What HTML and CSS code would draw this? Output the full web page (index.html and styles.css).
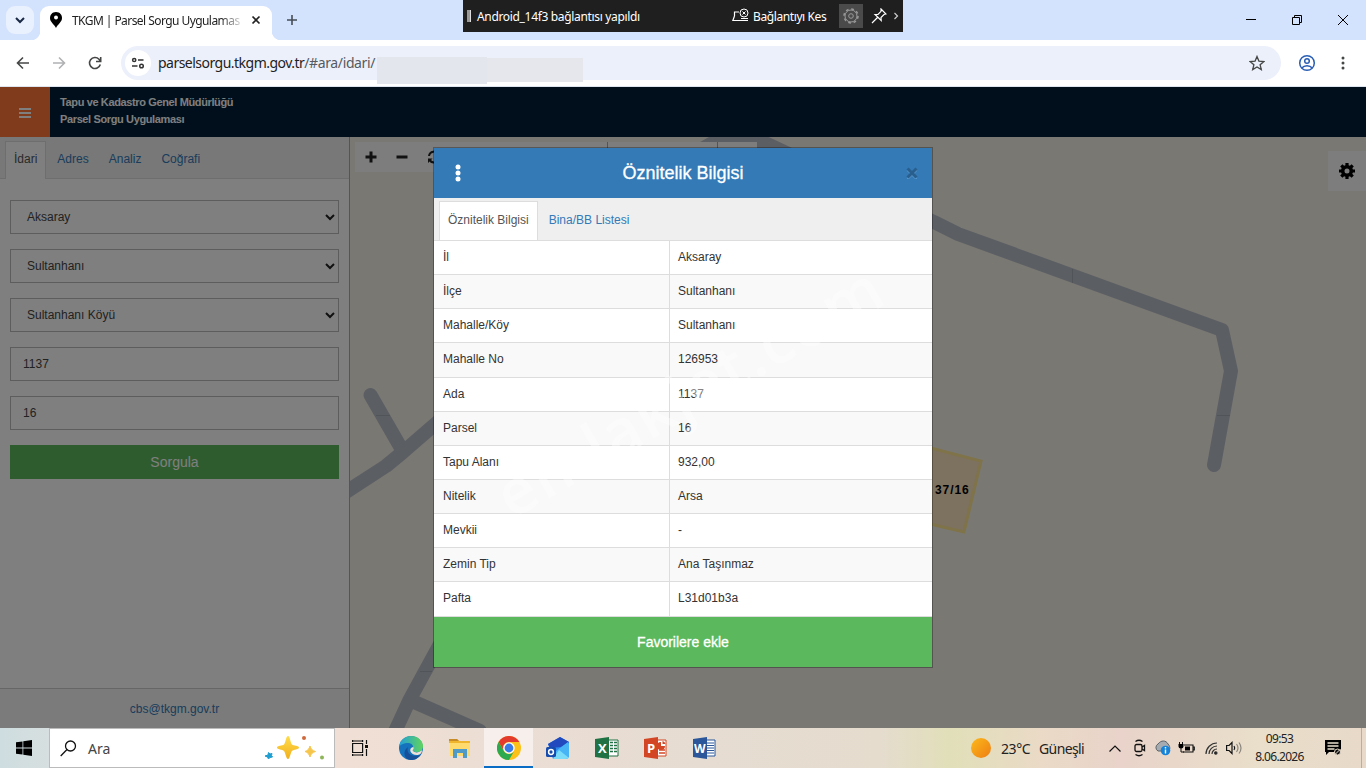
FILE: index.html
```html
<!DOCTYPE html>
<html lang="tr">
<head>
  <meta charset="UTF-8">
  <title>TKGM | Parsel Sorgu Uygulaması</title>
  <link rel="stylesheet" href="styles.css">
</head>
<body>
  <div class="tab-strip">
    <div class="tab-search"><svg width="12" height="12" viewBox="0 0 12 12"><path d="M2 4l4 4 4-4" fill="none" stroke="#1a2a44" stroke-width="2"/></svg></div>
    <div class="browser-tab">
      <svg width="14" height="18" viewBox="0 0 14 18"><path d="M7 1C3 1 1 4 1 7c0 4 4 6 6 10 2-4 6-6 6-10 0-3-2-6-6-6z" fill="#000"/><circle cx="7" cy="6.500" r="2" fill="#fff"/></svg>
      <span class="tab-title">TKGM | Parsel Sorgu Uygulamas</span>
      <svg width="10" height="10" viewBox="0 0 10 10"><path d="M1.500 1.500l7 7M8.500 1.500l-7 7" stroke="#222" stroke-width="1.700"/></svg>
    </div>
    <svg class="new-tab" width="12" height="12" viewBox="0 0 12 12"><path d="M6 1v10M1 6h10" stroke="#474d57" stroke-width="1.600"/></svg>
    <div class="window-buttons">
      <svg width="10" height="10" viewBox="0 0 10 10"><path d="M0 4.500h10" stroke="#000"/></svg>
      <svg width="10" height="10" viewBox="0 0 10 10"><path d="M.5 2.500h7v7h-7zM2.500 2.500v-2h7v7h-2" fill="none" stroke="#000"/></svg>
      <svg width="10" height="10" viewBox="0 0 10 10"><path d="M0 0l10 10M10 0L0 10" stroke="#000"/></svg>
    </div>
    <div class="cast-bar">
      <i class="grip"></i>
      <span class="cast-name">Android_14f3 bağlantısı yapıldı</span>
      <svg width="18" height="16" viewBox="0 0 18 16"><path d="M7 4H2.500v4M2.500 8L.8 12.500h10.700M11.500 12.500h4.500M9 10.500h7" fill="none" stroke="#fff" stroke-width="1.200"/><circle cx="12" cy="5" r="4" fill="#1f1f1f" stroke="#fff"/><path d="M10.500 3.500l3 3M13.500 3.500l-3 3" stroke="#fff"/></svg>
      <span class="cast-stop">Bağlantıyı Kes</span>
      <span class="cast-gear"><svg width="18" height="18" viewBox="0 0 18 18" fill="none" stroke="#9a9a9a"><circle cx="9" cy="9" r="7" stroke-width="1.500" stroke-dasharray="2.750 2.750"/><circle cx="9" cy="9" r="6"/><circle cx="9" cy="9" r="2.300"/></svg></span>
      <svg class="cast-pin" width="16" height="16" viewBox="0 0 16 16"><path d="M10 1l5 5-2 .5-3 3 .2 3L4 6.500l3-.2 3-3zM6.500 9.500L1 15" fill="none" stroke="#fff" stroke-width="1.200"/></svg>
      <svg class="cast-more" width="5" height="8" viewBox="0 0 5 8"><path d="M.5 1l3 3-3 3" fill="none" stroke="#ccc" stroke-width="1.200"/></svg>
    </div>
  </div>

  <div class="toolbar">
    <svg class="nav-icon" width="16" height="16" viewBox="0 0 16 16" fill="none" stroke="#454746" stroke-width="1.600"><path d="M14 8H3M8 2.500L2.500 8 8 13.500"/></svg>
    <svg class="nav-icon" width="16" height="16" viewBox="0 0 16 16" fill="none" stroke="#b0b1b3" stroke-width="1.600"><path d="M2 8h11M8 2.500L13.500 8 8 13.500"/></svg>
    <svg class="nav-icon" width="16" height="16" viewBox="0 0 16 16" fill="none" stroke="#454746" stroke-width="1.600"><path d="M13.300 9.500A5.500 5.500 0 1 1 12 4.200L13.500 6M13.700 2v4.500H9"/></svg>
    <div class="address-bar">
      <span class="site-info"><svg width="14" height="14" viewBox="0 0 14 14" fill="none" stroke="#333" stroke-width="1.500"><circle cx="3.200" cy="4" r="1.600"/><path d="M7 4h5.500M1 10h5.500"/><circle cx="10.500" cy="10" r="1.800"/></svg></span>
      <span class="url">parselsorgu.tkgm.gov.tr<span class="url-path">/#ara/idari/</span></span>
      <i class="smudge smudge-a"></i><i class="smudge smudge-b"></i>
      <svg class="star" width="16" height="16" viewBox="0 0 16 16"><path d="M8 1.500l1.900 4.600 5 .4-3.800 3.200 1.200 4.900L8 12l-4.300 2.600 1.200-4.900L1.100 6.500l5-.4z" fill="none" stroke="#454746" stroke-width="1.300"/></svg>
    </div>
    <svg class="profile" width="18" height="18" viewBox="0 0 18 18" fill="none" stroke="#2a5fb4" stroke-width="1.500"><circle cx="9" cy="9" r="7.300"/><circle cx="9" cy="7" r="2.300"/><path d="M3.800 14c2.500-3 8-3 10.400 0"/></svg>
    <svg class="kebab" width="4" height="14" viewBox="0 0 4 14" fill="#454746"><circle cx="2" cy="2" r="1.500"/><circle cx="2" cy="7" r="1.500"/><circle cx="2" cy="12" r="1.500"/></svg>
  </div>

  <div class="app">
    <div class="app-header">
      <div class="menu-btn"><svg width="14" height="10" viewBox="0 0 14 10"><path d="M1 1h12M1 5h12M1 9h12" stroke="#fff" stroke-width="2"/></svg></div>
      <div class="app-title">Tapu ve Kadastro Genel Müdürlüğü<br>Parsel Sorgu Uygulaması</div>
    </div>
    <div class="app-main">
      <div class="sidebar">
        <div class="tabs">
          <a class="tab active">İdari</a><a class="tab">Adres</a><a class="tab">Analiz</a><a class="tab">Coğrafi</a>
        </div>
        <div class="form">
          <div class="field select">Aksaray<svg width="10" height="7" viewBox="0 0 10 7"><path d="M1 1l4 4 4-4" fill="none" stroke="#222" stroke-width="2"/></svg></div>
          <div class="field select">Sultanhanı<svg width="10" height="7" viewBox="0 0 10 7"><path d="M1 1l4 4 4-4" fill="none" stroke="#222" stroke-width="2"/></svg></div>
          <div class="field select">Sultanhanı Köyü<svg width="10" height="7" viewBox="0 0 10 7"><path d="M1 1l4 4 4-4" fill="none" stroke="#222" stroke-width="2"/></svg></div>
          <div class="field">1137</div>
          <div class="field">16</div>
          <div class="query-btn">Sorgula</div>
        </div>
        <div class="sidebar-footer">cbs@tkgm.gov.tr</div>
      </div>
      <div class="map">
        <svg class="roads" width="1016" height="591" viewBox="350 137 1016 591">
          <g fill="none" stroke="#b7bdc7" stroke-width="14" stroke-linejoin="round" stroke-linecap="round">
            <path d="M340 496L386 466L403 452L440 420"/>
            <path d="M370.500 395L401 448"/>
            <path d="M440 644L410 699L392 738M412 701L480 731"/>
            <path d="M700 150L725 136L765 143L934 222L958 234L1222 330L1231 371L1214 465"/>
          </g>
          <path d="M376 415.500h14M420 671.500h12M1072.500 269v14M1217 415.500h13" stroke="#a3a9b3"/>
          <path d="M900 440L981 461L964 532L900 517z" fill="#fae2be" stroke="#ffe694" stroke-width="3"/>
          <text x="935" y="494" class="parcel-label">37/16</text>
        </svg>
        <div class="map-tools">
          <svg width="12" height="12" viewBox="0 0 12 12"><path d="M6 .5v11M.5 6h11" stroke="#222" stroke-width="3"/></svg>
          <svg width="12" height="12" viewBox="0 0 12 12"><path d="M.5 6h11" stroke="#222" stroke-width="3"/></svg>
          <svg width="14" height="14" viewBox="0 0 14 14"><path d="M11.500 4.500A5 5 0 0 0 2 6M2.500 9.500A5 5 0 0 0 12 8" fill="none" stroke="#222" stroke-width="2"/><path d="M1 13V8.500h4.500zM13 1v4.500H8.500z" fill="#222"/></svg>
          <i class="tool-line line-a"></i><i class="tool-line line-b"></i>
        </div>
        <div class="map-settings"><svg width="16" height="16" viewBox="0 0 16 16"><circle cx="8" cy="8" r="4.300" fill="none" stroke="#000" stroke-width="3.600"/><path d="M8 0v3M8 13v3M0 8h3M13 8h3M2.300 2.300l2.200 2.200M11.500 11.500l2.200 2.200M2.300 13.700l2.200-2.200M11.500 4.500l2.200-2.200" stroke="#000" stroke-width="3.200"/></svg></div>
      </div>
    </div>

    <div class="backdrop"></div>

    <div class="modal">
      <div class="modal-header">
        <svg width="6" height="18" viewBox="0 0 6 18" fill="#fff"><circle cx="3" cy="3" r="2.500"/><circle cx="3" cy="9" r="2.500"/><circle cx="3" cy="15" r="2.500"/></svg>
        <h4>Öznitelik Bilgisi</h4>
        <svg width="12" height="12" viewBox="0 0 12 12"><path d="M1.500 3l9 9M10.500 3l-9 9" stroke="#5f99cb" stroke-width="2"/><path d="M1.500 1.500l9 9M10.500 1.500l-9 9" stroke="#295f8e" stroke-width="3"/></svg>
      </div>
      <div class="tabs modal-tabs">
        <a class="tab active">Öznitelik Bilgisi</a><a class="tab">Bina/BB Listesi</a>
      </div>
      <div class="info">
        <div class="row"><span>İl</span><span>Aksaray</span></div>
        <div class="row"><span>İlçe</span><span>Sultanhanı</span></div>
        <div class="row"><span>Mahalle/Köy</span><span>Sultanhanı</span></div>
        <div class="row"><span>Mahalle No</span><span>126953</span></div>
        <div class="row"><span>Ada</span><span>1137</span></div>
        <div class="row"><span>Parsel</span><span>16</span></div>
        <div class="row"><span>Tapu Alanı</span><span>932,00</span></div>
        <div class="row"><span>Nitelik</span><span>Arsa</span></div>
        <div class="row"><span>Mevkii</span><span>-</span></div>
        <div class="row"><span>Zemin Tip</span><span>Ana Taşınmaz</span></div>
        <div class="row"><span>Pafta</span><span>L31d01b3a</span></div>
      </div>
      <div class="fav-btn">Favorilere ekle</div>
      <div class="watermark">emlakjet.com</div>
    </div>
  </div>

  <div class="taskbar">
    <div class="start"><svg width="16" height="16" viewBox="0 0 16 16"><path d="M0 2.300L6.500 1.400v6.200H0zM7.300 1.300L16 0v7.600H7.300zM0 8.400h6.500v6.200L0 13.700zM7.300 8.400H16V16l-8.700-1.300z"/></svg></div>
    <div class="search-box">
      <svg width="17" height="17" viewBox="0 0 17 17" fill="none" stroke="#111" stroke-width="1.300"><circle cx="10.500" cy="6" r="5"/><path d="M7 9.500L.7 16"/></svg>
      <span>Ara</span>
      <svg class="sparkles" width="62" height="26" viewBox="0 0 62 26"><defs><linearGradient id="gold" x2="0" y2="1"><stop offset="0" stop-color="#ffdc4c"/><stop offset="1" stop-color="#f2b01c"/></linearGradient></defs><path d="M24 1c2 0 2.500 7 4 8.500S35 10.500 35 12.500s-5.500 2-7 3.500-2 8-4 8-2.500-6.500-4-8-7-1.500-7-3.500 5.500-1.500 7-3S22 1 24 1z" fill="url(#gold)"/><path d="M46 11c1 3 2 4.500 5.500 5.500C48 17.500 47 19 46 22c-1-3-2-4.500-5-5.500 3-1 4-2.500 5-5.500z" fill="#f6c64c" stroke="#f6c64c"/><path d="M4.500 17.500l1.500 1.500 2-.5-.5 2 1 1.500-2.500.5L4.500 24l-1-2-2.500-1L4 20z" fill="#1e9ed0" stroke="#1e9ed0"/><circle cx="40" cy="3" r="2" fill="#d06a3c"/><circle cx="58" cy="22.500" r="2" fill="#8eb558"/></svg>
    </div>
    <div class="apps">
      <span class="app-icon task-view"><svg width="16" height="16" viewBox="0 0 16 16" fill="none" stroke="#111" stroke-width="1.200"><path d="M.6 3.500h10v9h-10zM.6 0v2M10.600 0v2M.6 14v2M10.600 14v2M0 1h11M0 15h11M14.500 0v4M14.500 9v7"/><path d="M13 5h3v3h-3z" fill="#111" stroke="none"/></svg></span>
      <span class="app-icon"><svg width="24" height="24" viewBox="0 0 24 24"><defs><linearGradient id="edge-top"><stop offset="0" stop-color="#239fd8"/><stop offset="1" stop-color="#60d45b"/></linearGradient></defs><circle cx="12" cy="12" r="12" fill="#1572bd"/><path d="M0 11C1 4 6 0 12 0c7 0 12 5 12 10 0 4-3 6-6 6-3 0-5-1-4-3 1-4-2-6-5-6-4 0-8 2-9 4z" fill="url(#edge-top)"/><path d="M9 11c-2 5 2 9 8 9 2 0 4-1 5-2-3 5-7 6-10 6-7 0-9-9-3-13z" fill="#174f99"/><path d="M14 11c2 1-1 3 0 4 2 2 6 2 9-1 0 4-3 5-5 5-7 0-9-7-4-8z" fill="#eee0d6"/></svg></span>
      <span class="app-icon"><svg width="22" height="20" viewBox="0 0 22 20"><path d="M0 1h8l2 2h11v15H1V5H0z" fill="#eeb52d"/><path d="M1 5h20v13H1z" fill="#ffda6d"/><path d="M0 1h8l2 2H0z" fill="#c88c27"/><path d="M4 11h14v9h-4v-5H8v5H4z" fill="#4f9ac6"/></svg></span>
      <span class="app-icon current"><svg width="24" height="24" viewBox="0 0 24 24"><circle cx="12" cy="12" r="12" fill="#fbc116"/><path d="M1.600 6A12 12 0 0 1 22.400 6H12a6 6 0 0 0-5.200 9z" fill="#e33b2e"/><path d="M1.600 6A12 12 0 0 0 12 24l5.200-9a6 6 0 0 1-10.400 0z" fill="#2da94f"/><circle cx="12" cy="12" r="5.700" fill="#fff"/><circle cx="12" cy="12" r="4.400" fill="#387be8"/></svg></span>
      <span class="app-icon"><svg width="24" height="22" viewBox="0 0 24 22"><path d="M2 7L14 0l9 5v13q0 4-4 4H7z" fill="#2e86ea"/><path d="M2 7L14 0l9 5-8 5L4 11z" fill="#2249bd"/><path d="M10 14L22 5l1 2v11q0 4-4 4H7z" fill="#47b4f5"/><path d="M13 13l10 8q-2 1-4 1H7z" fill="#7adcf8"/><rect y="10" width="10" height="10" rx="1.500" fill="#164cae"/><circle cx="5" cy="15" r="2.400" fill="none" stroke="#fff" stroke-width="1.500"/></svg></span>
      <span class="app-icon"><svg width="24" height="22" viewBox="0 0 24 22"><path d="M12 3h11v16H12z" fill="#fff" stroke="#207245"/><path d="M15 5.500h3M19 5.500h3M15 8.500h3M19 8.500h3M15 11.500h3M19 11.500h3M15 14.500h3M19 14.500h3" stroke="#207245" stroke-width="1.700"/><path d="M0 2l14-2v22L0 20z" fill="#207245"/><text x="3" y="16" class="office">X</text></svg></span>
      <span class="app-icon"><svg width="24" height="22" viewBox="0 0 24 22"><path d="M12 3h10v16H12z" fill="#fff" stroke="#d24625"/><path d="M15 13h6M15 16h6" stroke="#d24625" stroke-width="1.500"/><path d="M17 5v4h4a4 4 0 1 1-4-4zM18.500 4a4 4 0 0 1 3 3h-3z" fill="#d24625"/><path d="M0 2l14-2v22L0 20z" fill="#d24625"/><text x="3" y="16" class="office">P</text></svg></span>
      <span class="app-icon"><svg width="24" height="22" viewBox="0 0 24 22"><path d="M12 3h10v16H12z" fill="#fff" stroke="#2b579a"/><path d="M14 6h7M14 8.500h7M14 11h7M14 13.500h7M14 16h7" stroke="#2b579a"/><path d="M0 2l14-2v22L0 20z" fill="#2b579a"/><text x="1" y="15.500" class="office word">W</text></svg></span>
    </div>
    <div class="tray">
      <i class="sun"></i>
      <span class="temp">23°C</span><span class="sky">Güneşli</span>
      <svg class="up" width="12" height="7" viewBox="0 0 12 7"><path d="M.5 6.500L6 1l5.500 5.500" fill="none" stroke="#111" stroke-width="1.200"/></svg>
      <svg class="cam" width="12" height="18" viewBox="0 0 12 18" fill="none" stroke="#111" stroke-width="1.300"><rect x="1" y="5.500" width="7" height="7" rx="1.500"/><path d="M8 8l2.500-1.500v5L8 10M1.500 2.500q3.500-2.500 7 0M1.500 15.500q3.500 2.500 7 0"/></svg>
      <svg class="cloud" width="17" height="16" viewBox="0 0 17 16"><path d="M4 11a4 4 0 0 1 0-7c3-4 8-4 10 0 3 3 2 7-1 7z" fill="#a5abb0" stroke="#59636b"/><circle cx="11.500" cy="10.500" r="4.800" fill="#1683d8"/><path d="M11.500 9.500v4M11.500 7v1.500" stroke="#fff" stroke-width="1.400"/></svg>
      <svg class="battery" width="17" height="14" viewBox="0 0 17 14"><path d="M6 4h9v7H5M15 6h1.300v3H15" fill="none" stroke="#111" stroke-width="1.100"/><path d="M7 5.500h5v4H7zM.5 3h5v2.500q0 2-2.500 2-2.500 0-2.500-2z"/><path d="M1.500 1v2M4.500 1v2M3 7v4h3" fill="none" stroke="#111"/></svg>
      <svg class="wifi" width="13" height="13" viewBox="0 0 13 13" fill="none" stroke="#333" stroke-width="1.200"><path d="M1 12A11 11 0 0 1 12 1M4 12a8 8 0 0 1 8-8M7 12a5 5 0 0 1 5-5"/><circle cx="10.800" cy="11" r="1.200" fill="#111"/></svg>
      <svg class="volume" width="16" height="14" viewBox="0 0 16 14" fill="none" stroke="#111" stroke-width="1.200"><path d="M.6 4.500h2.500L6 1.500v11L3.100 9.500H.6z"/><path d="M8 5q1.500 2 0 4"/><path d="M10.500 3q3 4 0 8M13 1.500q4 5.500 0 11" stroke="#8b867e"/></svg>
      <div class="clock">09:53<br>8.06.2026</div>
      <svg class="notes" width="16" height="16" viewBox="0 0 16 16"><path d="M0 0h16v9l-4 3H4l-3 3v-3H0z"/><path d="M2.500 3h11M2.500 6h11M2.500 9h7" stroke="#eadfce" stroke-width="1.300"/><circle cx="12.500" cy="12" r="3" fill="#111" stroke="#eadfce"/><path d="M10.500 14l4-4" stroke="#eadfce"/></svg>
      <i class="desktop-edge"></i>
    </div>
  </div>
</body>
</html>
```

FILE: styles.css
```css
* { box-sizing: border-box; }
body { margin: 0; width: 1366px; height: 768px; overflow: hidden; display: flex; flex-direction: column; font: 12px/17px "Liberation Sans", Arial, sans-serif; color: #333; background: #fff; }
svg { display: block; flex: none; }
i { font-style: normal; }

/* browser */
.tab-strip { position: relative; height: 40px; flex: none; display: flex; align-items: flex-start; background: #d3e2fd; font-family: "Noto Sans", sans-serif; }
.tab-search { width: 28px; height: 28px; margin: 6px 6px 0; border-radius: 9px; background: #e9f0fe; display: flex; align-items: center; justify-content: center; }
.browser-tab { position: relative; width: 232px; height: 34px; margin-top: 6px; padding: 0 11px 6px 9px; display: flex; align-items: center; background: #fff; border-radius: 9px 9px 0 0; }
.browser-tab::before, .browser-tab::after { content: ""; position: absolute; bottom: 0; width: 9px; height: 9px; }
.browser-tab::before { left: -9px; background: radial-gradient(circle at 0 0, #d3e2fd 9px, #fff 9.500px); }
.browser-tab::after { right: -9px; background: radial-gradient(circle at 100% 0, #d3e2fd 9px, #fff 9.500px); }
.tab-title { width: 172px; margin-left: 9px; margin-right: auto; padding-top: 1px; white-space: nowrap; color: #222; font-size: 12px; letter-spacing: -0.56px; -webkit-mask-image: linear-gradient(90deg, #000 148px, rgba(0, 0, 0, 0.15) 169px); }
.new-tab { margin: 14px 0 0 14px; }
.window-buttons { display: flex; gap: 36px; margin: 15px 18px 0 auto; }
.cast-bar { position: absolute; left: 463px; top: 0; width: 440px; height: 32px; display: flex; align-items: center; background: #1f1f1f; color: #fff; font-size: 12px; white-space: nowrap; }
.grip { width: 4px; height: 12px; margin: 0 6px 0 4px; background: #999; border-right: 1px solid #ddd; }
.cast-name { width: 255px; letter-spacing: -0.33px; }
.cast-stop { width: 84px; margin-left: 3px; letter-spacing: -0.4px; }
.cast-gear { width: 24px; height: 24px; margin-left: 2px; background: #4a4a4a; display: flex; align-items: center; justify-content: center; }
.cast-pin { margin-left: 8px; }
.cast-more { margin-left: 7px; }

.toolbar { height: 47px; flex: none; display: flex; align-items: center; padding: 0 21px 1px 15px; background: #fff; border-bottom: 1px solid #dfe5ef; }
.nav-icon { margin-right: 20px; }
.address-bar { position: relative; width: 1160px; height: 34px; margin-left: -2px; padding: 0 16px 0 4px; display: flex; align-items: center; border-radius: 17px; background: #ecf0fa; }
.site-info { width: 26px; height: 26px; border-radius: 50%; background: #fff; display: flex; align-items: center; justify-content: center; }
.url { margin-left: 7px; font: 14px/20px "Noto Sans", sans-serif; letter-spacing: -0.52px; color: #222; }
.url-path { color: #555a60; letter-spacing: -0.38px; }
.star { margin-left: auto; }
.smudge { position: absolute; background: #e3e6ec; }
.smudge-a { left: 256px; top: 11px; width: 110px; height: 27px; }
.smudge-b { left: 366px; top: 12px; width: 96px; height: 24px; background: #e5e7ec; }
.profile { margin-left: 17px; }
.kebab { margin-left: auto; }

/* application */
.app { position: relative; flex: 1; min-height: 0; display: flex; flex-direction: column; }
.app-header { height: 50px; flex: none; display: flex; background: #001e36; color: #fff; }
.menu-btn { width: 50px; background: #ff7636; display: flex; align-items: center; justify-content: center; padding-top: 2px; }
.app-title { padding: 7px 10px; font-size: 11px; font-weight: bold; letter-spacing: -0.37px; }
.app-main { flex: 1; min-height: 0; display: flex; }
.sidebar { width: 350px; flex: none; display: flex; flex-direction: column; background: #fff; border-right: 1px solid #aaa; }
.tabs { display: flex; height: 42px; padding: 4px 5px 0; background: #f0f0f0; border-bottom: 1px solid #ddd; }
.tab { height: 38px; margin-right: 2px; padding: 9px 8px 8px; border: 1px solid transparent; border-bottom: 0; color: #337ab7; white-space: nowrap; }
.tab.active { color: #555; background: #fff; border-color: #ddd; }
.form { padding: 21px 10px 0; display: flex; flex-direction: column; gap: 15px; }
.field { height: 34px; padding: 0 12px; display: flex; align-items: center; border: 1px solid #bbb; color: #444; }
.field.select { padding: 0 3px 0 16px; justify-content: space-between; }
.query-btn { height: 34px; line-height: 34px; text-align: center; font-size: 14px; color: #fff; background: #5cb85c; }
.sidebar-footer { margin-top: auto; height: 40px; padding-top: 12px; line-height: 17px; text-align: center; color: #337ab7; background: #f7f7f7; border-top: 1px solid #ccc; }
.map { position: relative; flex: 1; background: #f4f0e6; }
.parcel-label { font: bold 12px "Liberation Sans", Arial, sans-serif; letter-spacing: 0.9px; fill: #000; }
.map-tools { position: absolute; left: 5px; top: 5px; width: 402px; height: 30px; padding-left: 10px; display: flex; align-items: center; gap: 19px; background: #fafafa; }
.tool-line { position: absolute; top: 0; width: 1px; height: 30px; background: #aaa; }
.line-a { left: 252px; }
.line-b { left: 362px; }
.map-settings { position: absolute; right: 0; top: 14px; width: 38px; height: 40px; display: flex; align-items: center; justify-content: center; background: #fafafa; }
.backdrop { position: absolute; inset: 0; background: rgba(0, 0, 0, 0.5); }

.modal { position: absolute; left: 433px; top: 60px; width: 500px; height: 521px; border: 1px solid rgba(0, 0, 0, 0.3); background: #fff; background-clip: padding-box; overflow: hidden; }
.modal-header { height: 50px; padding: 0 14px 0 21px; display: flex; align-items: center; background: #337ab7; color: #fff; }
.modal-header h4 { flex: 1; margin: 0; padding-right: 1px; text-align: center; font-size: 18px; font-weight: normal; -webkit-text-stroke: 0.3px #fff; }
.modal-tabs { height: 43px; padding-top: 3px; background: #efefef; }
.modal-tabs .tab { height: 39px; padding-top: 10px; }
.info { height: 377px; padding-bottom: 1px; display: grid; grid-template-rows: repeat(10, 34.14px) 1fr; }
.row { display: grid; grid-template-columns: 236px 1fr; border-bottom: 1px solid #ddd; }
.row:nth-child(even) { background: #f9f9f9; }
.row span { padding: 8px 8px 0 9px; line-height: 17px; }
.row span + span { padding-left: 8px; border-left: 1px solid #ddd; margin-left: -1px; }
.fav-btn { height: 51px; margin-top: -1px; line-height: 51px; text-align: center; font-size: 14px; color: #fff; background: #5cb85c; -webkit-text-stroke: 0.3px #fff; }
.watermark { position: absolute; left: 10px; top: 202px; width: 490px; text-align: center; font: 600 63px/80px "Open Sans", sans-serif; letter-spacing: 2px; color: rgba(255, 255, 255, 0.4); transform: rotate(-30deg); pointer-events: none; }

/* taskbar */
.taskbar { height: 40px; flex: none; display: flex; align-items: stretch; background: linear-gradient(90deg, #cedde0 0, #dce0df 80px, #f0dfd5 350px, #e6dcd2 700px, #e5dcce 880px, #e1dfb9 950px, #eadac6 1040px, #e9d3ca 1120px, #e9dfca 1260px, #e8d9c9 1366px); font-family: "Noto Sans", sans-serif; color: #222; }
.start { width: 49px; padding-right: 1px; display: flex; align-items: center; justify-content: center; }
.search-box { width: 286px; border: 1px solid #bbb; background: #fff; display: flex; align-items: center; padding: 0 8px 0 10px; }
.search-box span { margin-left: 11px; font-size: 14px; color: #444; }
.sparkles { margin-left: auto; }
.apps { display: flex; }
.app-icon { width: 49px; display: flex; align-items: center; justify-content: center; }
.app-icon.task-view { width: 51px; padding-right: 2px; }
.app-icon.current { background: #f7efeb; border-bottom: 2px solid #0a6cc4; padding-top: 2px; }
.office { font: bold 13px "Open Sans", sans-serif; fill: #fff; }
.office.word { font-size: 12px; }
.tray { margin-left: auto; display: flex; align-items: center; white-space: nowrap; }
.sun { width: 20px; height: 20px; margin-right: 10px; border-radius: 50%; background: linear-gradient(135deg, #fcb91c, #ee7d12); }
.temp { width: 38px; font-size: 14px; letter-spacing: -0.4px; }
.sky { width: 70px; font-size: 14px; letter-spacing: -0.6px; }
.cam { margin-left: 13px; }
.cloud { margin-left: 8px; }
.battery { margin-left: 7px; }
.wifi { margin-left: 10px; }
.volume { margin-left: 8px; }
.clock { width: 75px; text-align: center; font-size: 12px; line-height: 18px; letter-spacing: -0.65px; }
.notes { margin-left: 8px; }
.desktop-edge { width: 1px; height: 40px; margin: 0 4px 0 20px; background: #b9aea3; }
```
